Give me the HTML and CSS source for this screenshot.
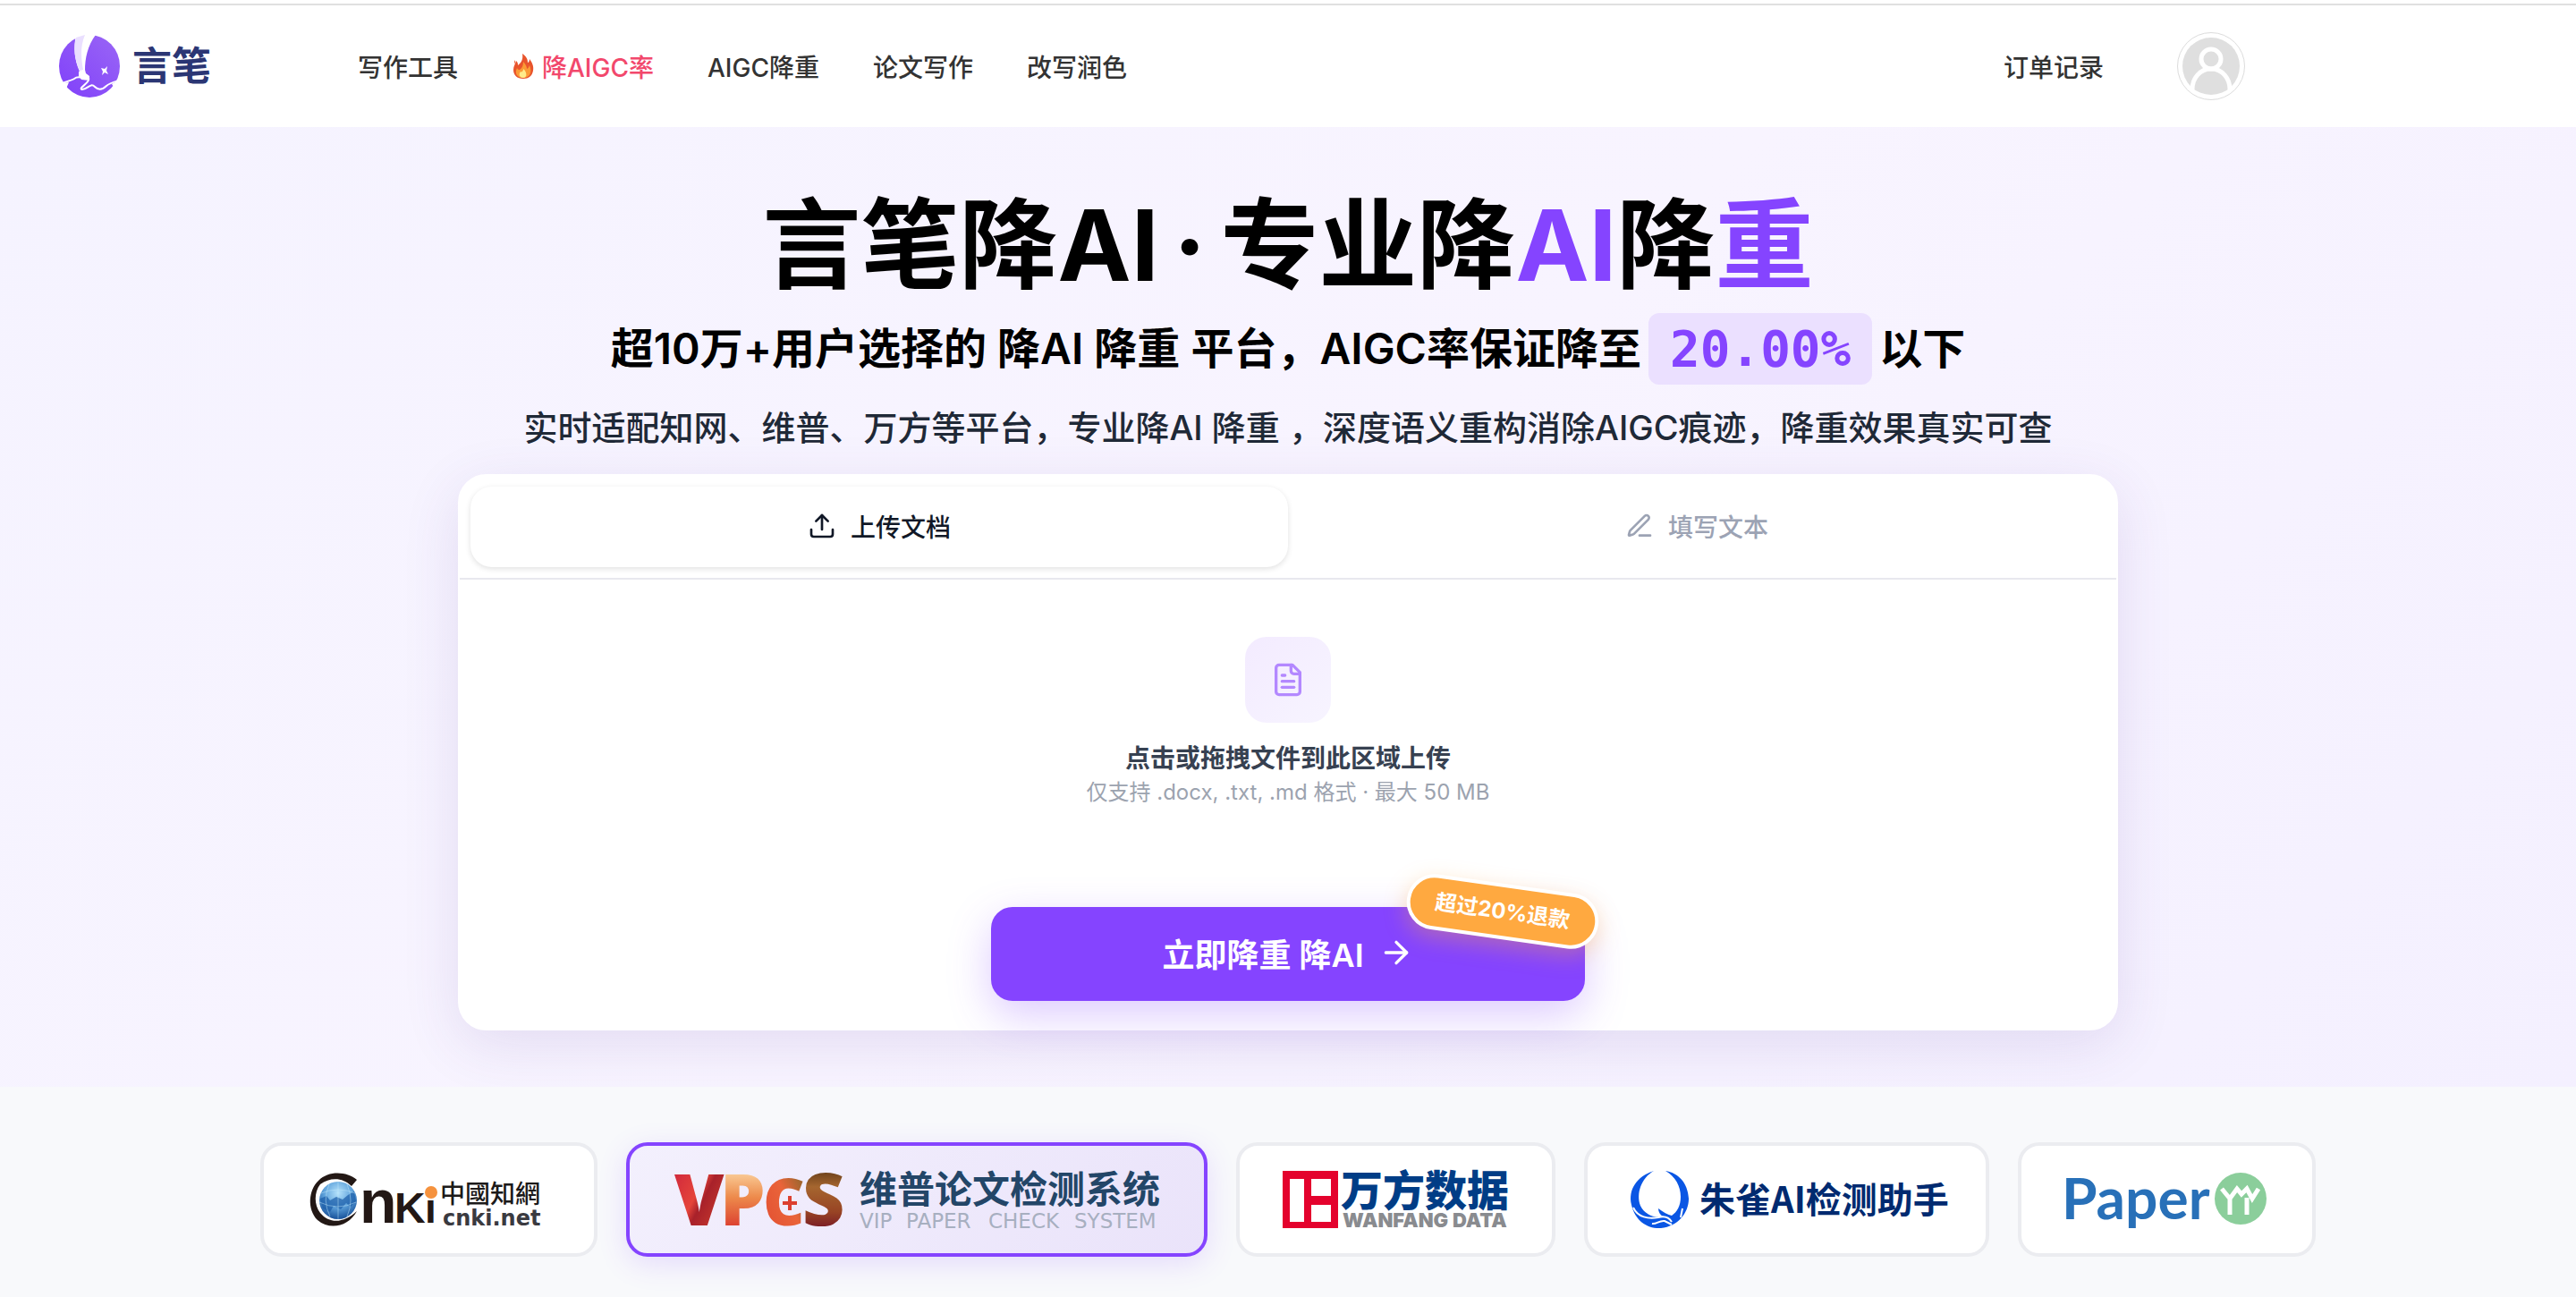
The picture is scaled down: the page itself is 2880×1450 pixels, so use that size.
FILE: index.html
```html
<!DOCTYPE html>
<html lang="zh-CN">
<head>
<meta charset="utf-8">
<meta name="viewport" content="width=device-width, initial-scale=1">
<title>言笔</title>
<link rel="stylesheet" href="styles.css">
</head>
<body>
<header class="header">
  <a class="brand" href="#">
    <svg class="brand-mark" viewBox="0 0 68 70" aria-hidden="true">
      <defs>
        <linearGradient id="brandFill" x1="1" y1="0" x2="0" y2="1"><stop offset="0" stop-color="#9a66f5"/><stop offset="1" stop-color="#8040fa"/></linearGradient>
      </defs>
      <ellipse cx="34" cy="35" rx="34" ry="35" fill="url(#brandFill)"/>
      <path d="M18 0H41C32 12 29 26 29 40L23 41C17 27 16 14 19 0Z" fill="#fff"/>
      <path d="M19 3L29 0C23 14 25 28 27 39L23 40C17 27 16 14 19 3Z" fill="#eadfff"/>
      <path d="M22 41L29 39L30 43L34 46V51L25 50L22 46Z" fill="#fff"/>
      <path d="M3 54C9 52 14 51 17 49C23 44 29 51 33 48C36 53 20 60 26 61C32 61 35 53 40 58C45 63 50 60 53 57C56 54 60 53 67 51" fill="none" stroke="#fff" stroke-width="2"/>
      <path d="M0 51C4 55 8 53 11 53L8 60L0 62Z" fill="#fff"/>
      <path d="M68 49C64 53 62 53 59 55L63 61L68 56Z" fill="#fff"/>
      <path d="M47 37L51 38L54 35L53 40L55 44L51 42L48 45L49 41Z" fill="#fff"/>
    </svg>
    <span class="brand-name">言笔</span>
  </a>
  <nav class="nav">
    <a href="#">写作工具</a>
    <a class="hot" href="#">
      <svg class="flame" viewBox="0 0 24 28" aria-hidden="true">
        <path d="M11 0C17 4 17 8 17 10C18 10 19 8 19 6C22 10 24 14 23 19C22 25 18 28 12 28C5 28 1 24 1 18C1 14 3 12 4 8C6 10 6 11 6 13C10 10 12 6 11 0Z" fill="#e8542c"/>
        <path d="M12 9C15 12 16 15 16 17C18 16 18 15 19 13C22 20 20 27 12 27C5 27 2 22 5 16C6 18 7 18 8 18C11 16 12 13 12 9Z" fill="#fb9b35"/>
        <path d="M12 17C16 20 17 27 12 27C7 27 7 22 9 20C10 21 12 20 12 17Z" fill="#ffec8a"/>
        <path d="M2 7L3 9L2 12Z" fill="#e8542c"/>
      </svg>降AIGC率</a>
    <a href="#">AIGC降重</a>
    <a href="#">论文写作</a>
    <a href="#">改写润色</a>
  </nav>
  <div class="account">
    <a href="#">订单记录</a>
    <button class="avatar" type="button" aria-label="账户">
      <svg viewBox="0 0 64 64" aria-hidden="true">
        <circle cx="32" cy="32" r="32" fill="#dfdfdf"/>
        <g fill="none" stroke="#fff" stroke-width="5"><circle cx="32" cy="24" r="11"/><path d="M11 58C11 45 20 35 32 35S53 45 53 58"/></g>
      </svg>
    </button>
  </div>
</header>

<main>
  <section class="hero">
    <h1 class="title">言笔降AI<span class="dot">·</span>专业降<em>AI</em>降<em>重</em></h1>
    <p class="lead"><span>超10万+用户选择的 降AI 降重 平台，AIGC率保证降至</span><strong class="rate">20.00%</strong><span>以下</span></p>
    <p class="note">实时适配知网、维普、万方等平台，专业降AI 降重 ，深度语义重构消除AIGC痕迹，降重效果真实可查</p>

    <div class="card">
      <div class="tabs" role="tablist">
        <button class="tab active" type="button" role="tab" aria-selected="true">
          <svg class="icon" viewBox="0 0 24 24" aria-hidden="true"><path d="M21 15v4a2 2 0 0 1-2 2H5a2 2 0 0 1-2-2v-4"/><path d="M17 8l-5-5-5 5"/><path d="M12 3v12"/></svg>
          上传文档
        </button>
        <button class="tab" type="button" role="tab" aria-selected="false">
          <svg class="icon" viewBox="0 0 24 24" aria-hidden="true"><path d="M12 20h9"/><path d="M16.376 3.622a1 1 0 0 1 3.002 3.002L7.368 18.635a2 2 0 0 1-.855.506l-2.872.838a.5.5 0 0 1-.62-.62l.838-2.872a2 2 0 0 1 .506-.854z"/></svg>
          填写文本
        </button>
      </div>
      <div class="panel">
        <label class="drop" for="file">
          <input class="file" id="file" type="file" accept=".docx,.txt,.md">
          <span class="drop-icon">
            <svg viewBox="0 0 24 24" aria-hidden="true"><path d="M15 2H6a2 2 0 0 0-2 2v16a2 2 0 0 0 2 2h12a2 2 0 0 0 2-2V7Z"/><path d="M14 2v4a2 2 0 0 0 2 2h4"/><path d="M10 9H8"/><path d="M16 13H8"/><path d="M16 17H8"/></svg>
          </span>
          <span class="drop-title">点击或拖拽文件到此区域上传</span>
          <span class="drop-hint">仅支持 .docx, .txt, .md 格式 · 最大 50 MB</span>
        </label>
        <div class="action">
          <button class="submit" type="button">立即降重 降AI
            <svg viewBox="0 0 24 24" aria-hidden="true"><path d="M5 12h14"/><path d="M12 5l7 7-7 7"/></svg>
          </button>
          <span class="badge">超过20%退款</span>
        </div>
      </div>
    </div>
  </section>

  <section class="partners">
    <button class="partner" type="button">
      <svg class="logo-cnki" viewBox="0 0 273 64" role="img" aria-label="中国知网">
        <defs>
          <radialGradient id="globe" cx="50%" cy="30%" r="75%"><stop offset="0" stop-color="#b5e2fb"/><stop offset=".5" stop-color="#5fa3dc"/><stop offset="1" stop-color="#0d4590"/></radialGradient>
        </defs>
        <path d="M13 11C25 -1 45 1 56 10L50 17C40 7 26 7 15 15C8 24 8 38 15 47C26 60 42 58 56 45C47 62 26 67 12 55C0 43 2 21 13 11Z" fill="#231815"/>
        <circle cx="35" cy="33" r="21" fill="url(#globe)"/>
        <path d="M15 31L22 28L26 33L33 29L40 32L46 27L53 23L55 34L49 40L44 36L38 43L30 39L26 46L18 42Z" fill="#1b5ca8" opacity=".7"/>
        <path d="M16 25Q35 17 54 25M14 35Q35 45 55 35M35 12V54M25 15Q17 33 26 51M45 15Q53 33 45 51" fill="none" stroke="#c5eafb" opacity=".45"/>
        <text class="cnki-dark" x="59" y="58" font-size="68">n</text>
        <text class="cnki-dark" x="98" y="58" font-size="48">K</text>
        <text class="cnki-dark" x="132" y="58" font-size="46">i</text>
        <circle cx="139" cy="24" r="7" fill="#f5923e"/>
        <text class="cnki-han" x="149" y="36" font-size="28">中國知網</text>
        <text class="cnki-net" x="152" y="61" font-size="24">cnki.net</text>
      </svg>
    </button>
    <button class="partner selected" type="button">
      <svg class="logo-vpcs" viewBox="0 0 546 64" role="img" aria-label="维普论文检测系统">
        <defs>
          <linearGradient id="vFill" x1="0" y1="0" x2="1" y2="1"><stop offset="0" stop-color="#c81f3d"/><stop offset=".45" stop-color="#e5443a"/><stop offset=".55" stop-color="#a8212a"/><stop offset="1" stop-color="#d9472f"/></linearGradient>
          <linearGradient id="pFill" x1="0" y1="0" x2="0" y2="1"><stop offset=".2" stop-color="#fcd9a6"/><stop offset=".5" stop-color="#ed8a4b"/><stop offset=".8" stop-color="#dc4030"/></linearGradient>
          <linearGradient id="cFill" x1="1" y1="0" x2="0" y2="1"><stop offset=".2" stop-color="#a3662f"/><stop offset=".45" stop-color="#ea6439"/><stop offset="1" stop-color="#e04a31"/></linearGradient>
          <linearGradient id="sFill" x1="0" y1="0" x2="0" y2="1"><stop offset=".2" stop-color="#5b3514"/><stop offset=".4" stop-color="#a5662f"/><stop offset=".65" stop-color="#984424"/><stop offset=".8" stop-color="#7c1f26"/></linearGradient>
        </defs>
        <g class="vpcs-mark" font-size="80">
          <text x="2" y="61" fill="url(#vFill)">V</text>
          <text x="53" y="61" fill="url(#pFill)">P</text>
          <text x="101" y="61" font-size="72" fill="url(#cFill)">C</text>
          <text x="145" y="61" font-size="82" fill="url(#sFill)">S</text>
        </g>
        <path d="M131 28V44M123 36H139" stroke="#dc4030" stroke-width="4"/>
        <text class="vpcs-han" x="209" y="36" font-size="42">维普论文检测系统</text>
        <text class="vpcs-en" y="64" font-size="23"><tspan x="209">VIP</tspan> <tspan x="261">PAPER</tspan> <tspan x="353">CHECK</tspan> <tspan x="449">SYSTEM</tspan></text>
      </svg>
    </button>
    <button class="partner" type="button">
      <svg class="logo-wanfang" viewBox="0 0 253 64" role="img" aria-label="万方数据">
        <path fill-rule="evenodd" d="M0 0H62V64H0ZM8 9V57H24V9ZM32 9V28H54V9ZM32 38V57H54V38Z" fill="#e4022d"/>
        <text class="wf-han" x="65" y="39" font-size="47">万方数据</text>
        <text class="wf-en" y="63" font-size="22"><tspan x="67">WANFANG</tspan> <tspan x="190">DATA</tspan></text>
      </svg>
    </button>
    <button class="partner" type="button">
      <svg class="logo-zhuque" viewBox="0 0 349 64" role="img" aria-label="朱雀AI检测助手">
        <path d="M26 0C7 6 -3 21 1 38C5 56 19 65 34 64C53 62 65 47 65 31C64 13 53 2 39 0C50 6 56 17 56 29C56 39 52 46 46 50C42 49 36 46 31 42C31 46 33 49 36 51C26 53 16 49 11 39C6 25 12 8 26 0Z" fill="#0a56e4"/>
        <path d="M3 41C8 52 20 54 31 52C38 50 43 52 46 57M24 59C29 60 32 55 38 56L46 60M56 52L58 42" fill="none" stroke="#fff" stroke-width="2"/>
        <text class="zq-han" x="77" y="47" font-size="40">朱雀AI检测助手</text>
      </svg>
    </button>
    <button class="partner" type="button">
      <svg class="logo-paper" viewBox="0 0 229 64" role="img" aria-label="PaperYY">
        <text class="paper-word" x="-3" y="54" font-size="64">Paper</text>
        <circle cx="197" cy="31" r="29" fill="#8bce9b"/>
        <path d="M176 20L185 31L193 20L198 26L204 20L210 31L217 20M185 31V49M204 30V49" fill="none" stroke="#fff" stroke-width="5"/>
      </svg>
    </button>
  </section>
</main>
</body>
</html>
```
FILE: styles.css
```css
* {
  box-sizing: border-box;
}

body {
  margin: 0;
  padding-top: 4px;
  min-height: 100vh;
  display: flex;
  flex-direction: column;
  font-family: Inter, "Noto Sans CJK SC", sans-serif;
  color: #333;
  background: #fff;
}

button {
  font: inherit;
  color: inherit;
  cursor: pointer;
}

a {
  color: inherit;
  text-decoration: none;
}

h1,
p {
  margin: 0;
}

main {
  flex: 1;
  display: flex;
  flex-direction: column;
}

/* Header */
.header {
  display: flex;
  align-items: center;
  height: 138px;
  padding: 0 370px 0 66px;
  border-top: 2px solid #e0e0e0;
  font-size: 28px;
  font-weight: 500;
}

.brand {
  display: flex;
  align-items: center;
  gap: 14px;
  margin-right: 164px;
}

.brand-mark {
  width: 68px;
  height: 70px;
}

.brand-name {
  font-size: 44px;
  line-height: 64px;
  font-weight: 700;
  color: #2b3674;
}

.nav {
  display: flex;
  gap: 60px;
}

.hot {
  display: flex;
  align-items: center;
  gap: 8px;
  color: #f2486c;
}

.flame {
  width: 26px;
  height: 28px;
}

.account {
  display: flex;
  align-items: center;
  gap: 82px;
  margin-left: auto;
}

.avatar {
  display: flex;
  width: 76px;
  height: 76px;
  padding: 5px;
  border: 1px solid #dcdcdc;
  border-radius: 50%;
  background: #fff;
}

.avatar svg {
  width: 64px;
  height: 64px;
}

/* Hero */
.hero {
  display: flex;
  flex-direction: column;
  align-items: center;
  padding: 72px 48px 63px;
  background: linear-gradient(135deg, #f5f3ff, #f8f4ff 50%, #f4f0ff);
}

.title {
  font-size: 110px;
  line-height: 120px;
  font-weight: 700;
  color: #000;
}

.title em {
  font-style: normal;
  color: #8544ff;
}

.dot {
  margin: 0 16px;
}

.lead {
  display: flex;
  align-items: center;
  gap: 8px;
  margin-top: 16px;
  font-size: 48px;
  line-height: 80px;
  font-weight: 600;
  color: #000;
}

.rate {
  padding: 0 24px;
  border-radius: 12px;
  background: #ebe0ff;
  font-family: "DejaVu Sans Mono", monospace;
  font-size: 56px;
  font-weight: 700;
  color: #8544ff;
}

.note {
  margin-top: 20px;
  font-size: 38px;
  line-height: 56px;
  font-weight: 500;
  color: #1f2937;
}

.card {
  width: 100%;
  max-width: 1856px;
  margin-top: 24px;
  border: 2px solid #fff;
  border-radius: 32px;
  background: #fff;
  box-shadow: 0 16px 64px rgba(80, 50, 150, .12);
}

.tabs {
  display: flex;
  padding: 12px;
  border-bottom: 2px solid #e8e8ee;
}

.tab {
  flex: 1;
  display: flex;
  align-items: center;
  justify-content: center;
  gap: 16px;
  height: 90px;
  padding: 0 0 2px;
  border: 0;
  border-radius: 24px;
  background: none;
  font-size: 28px;
  font-weight: 500;
  color: #9ca3b4;
}

.tab.active {
  color: #111827;
  background: #fff;
  box-shadow: 0 2px 6px rgba(0, 0, 0, .12);
}

.icon {
  width: 32px;
  height: 32px;
}

.icon,
.drop-icon svg,
.submit svg {
  fill: none;
  stroke: currentColor;
  stroke-width: 2;
  stroke-linecap: round;
  stroke-linejoin: round;
}

.panel {
  display: flex;
  flex-direction: column;
  align-items: center;
  padding: 64px 32px 31px;
}

.drop {
  position: relative;
  display: flex;
  flex-direction: column;
  align-items: center;
  cursor: pointer;
}

.file {
  position: absolute;
  width: 1px;
  height: 1px;
  opacity: 0;
}

.drop-icon {
  display: grid;
  place-items: center;
  width: 96px;
  height: 96px;
  margin-bottom: 20px;
  border-radius: 24px;
  background: linear-gradient(135deg, #f3ebff, #f7f4ff);
  color: #b388ff;
}

.drop-icon svg {
  width: 40px;
  height: 40px;
}

.drop-title {
  font-size: 28px;
  line-height: 40px;
  font-weight: 600;
  color: #374151;
}

.drop-hint {
  font-size: 24px;
  line-height: 36px;
  color: #9ca3af;
}

.action {
  position: relative;
  width: 100%;
  max-width: 664px;
  margin-top: 110px;
}

.submit {
  display: flex;
  align-items: center;
  justify-content: center;
  gap: 16px;
  width: 100%;
  height: 105px;
  padding: 0 0 4px;
  border: 0;
  border-radius: 24px;
  background: #8544ff;
  box-shadow: 0 16px 48px rgba(133, 68, 255, .28);
  font-size: 36px;
  font-weight: 600;
  color: #fff;
}

.submit svg {
  width: 40px;
  height: 40px;
}

.badge {
  position: absolute;
  top: -26px;
  right: -16px;
  padding: 0 28px;
  border: 4px solid #fff;
  border-radius: 31px;
  background: #ffa940;
  box-shadow: 0 8px 24px rgba(255, 169, 64, .35);
  font-size: 24px;
  line-height: 54px;
  font-weight: 700;
  color: #fff;
  transform: rotate(8deg);
}

/* Partner logos */
.partners {
  flex: 1;
  display: flex;
  align-items: flex-start;
  justify-content: center;
  gap: 32px;
  padding: 62px 48px 45px;
  background: #f8f9fb;
}

.partner {
  display: flex;
  padding: 28px 48px;
  border: 4px solid #ebecf0;
  border-radius: 24px;
  background: #fff;
}

.partner.selected {
  border-color: #8544ff;
  background: linear-gradient(135deg, #f3f0fd, #eae3fa);
  box-shadow: 0 8px 32px rgba(133, 68, 255, .16);
}

.partner svg {
  height: 64px;
  overflow: visible;
}

.logo-cnki {
  width: 273px;
}

.logo-vpcs {
  width: 546px;
}

.logo-wanfang {
  width: 253px;
}

.logo-zhuque {
  width: 349px;
}

.logo-paper {
  width: 229px;
}

.cnki-dark {
  font-family: "Liberation Sans", sans-serif;
  font-weight: 700;
  fill: #231815;
}

.cnki-han {
  font-family: "Noto Sans CJK TC", sans-serif;
  font-weight: 500;
  fill: #1c1a1a;
}

.cnki-net {
  font-family: "DejaVu Sans", sans-serif;
  font-weight: 700;
  fill: #3a3a40;
}

.vpcs-mark {
  font-family: "Open Sans", sans-serif;
  font-weight: 800;
}

.vpcs-han {
  font-family: "Noto Sans CJK SC", sans-serif;
  font-weight: 700;
  fill: #234668;
}

.vpcs-en {
  font-family: "DejaVu Sans", sans-serif;
  fill: #a7afc0;
}

.wf-han {
  font-family: "Noto Sans CJK SC", sans-serif;
  font-weight: 900;
  fill: #003d86;
}

.wf-en {
  font-family: Inter, sans-serif;
  font-weight: 900;
  fill: #898b8f;
}

.zq-han {
  font-family: "Noto Sans CJK SC", sans-serif;
  font-weight: 700;
  fill: #002a70;
}

.paper-word {
  font-family: Lato, sans-serif;
  font-weight: 700;
  fill: #2870b8;
}
```
